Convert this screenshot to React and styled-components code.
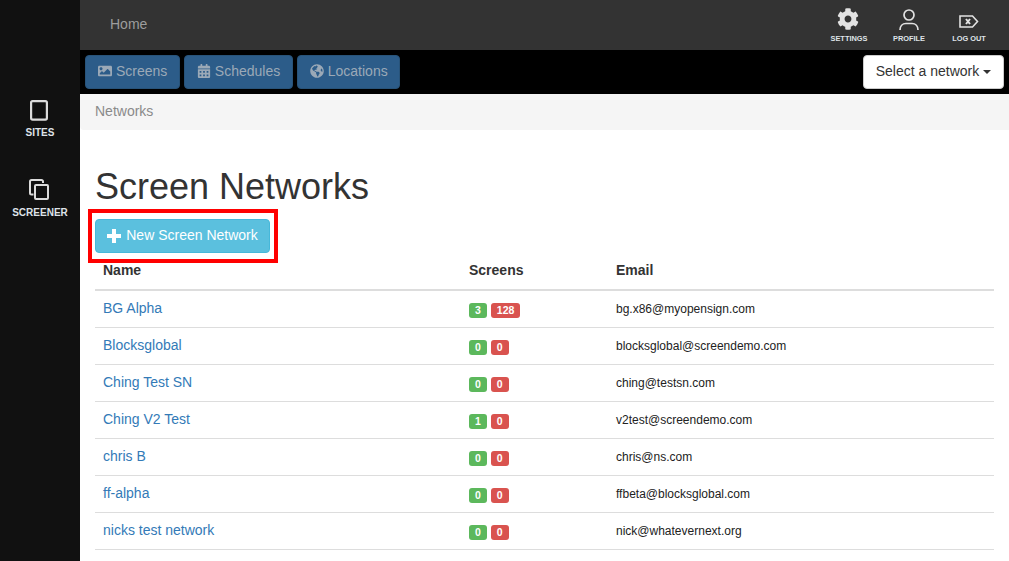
import React from 'react'
import styled, { createGlobalStyle } from 'styled-components'
import { FaCog, FaImage, FaCalendarAlt, FaGlobeAmericas } from 'react-icons/fa'

const GlobalStyle = createGlobalStyle`
  html, body {
    margin: 0;
    padding: 0;
    height: 100%;
    overflow: hidden;
    background: #fff;
  }
  body {
    font-family: "Liberation Sans", Arial, sans-serif;
    font-size: 14px;
    line-height: 20px;
    color: #333;
  }
  * { box-sizing: border-box; }
`

const networks = [
  { name: 'BG Alpha', up: 3, down: 128, email: 'bg.x86@myopensign.com' },
  { name: 'Blocksglobal', up: 0, down: 0, email: 'blocksglobal@screendemo.com' },
  { name: 'Ching Test SN', up: 0, down: 0, email: 'ching@testsn.com' },
  { name: 'Ching V2 Test', up: 1, down: 0, email: 'v2test@screendemo.com' },
  { name: 'chris B', up: 0, down: 0, email: 'chris@ns.com' },
  { name: 'ff-alpha', up: 0, down: 0, email: 'ffbeta@blocksglobal.com' },
  { name: 'nicks test network', up: 0, down: 0, email: 'nick@whatevernext.org' },
]

const Page = styled.div`
  display: flex;
  width: 1009px;
  height: 561px;
  overflow: hidden;
`

const Sidebar = styled.nav`
  width: 80px;
  flex: none;
  background: #111;
  padding-top: 100px;
  display: flex;
  flex-direction: column;
  gap: 39px;
`

const SideItem = styled.a`
  display: flex;
  flex-direction: column;
  align-items: center;
  gap: 6px;
  color: #dfe3e8;
  font-size: 10px;
  line-height: 12px;
  font-weight: 700;

  svg { display: block; }
`

const Main = styled.div`
  flex: 1;
  min-width: 0;
  display: flex;
  flex-direction: column;
`

const TopBar = styled.header`
  height: 50px;
  background: #333;
  display: flex;
  align-items: flex-start;
  justify-content: space-between;
  padding-left: 30px;
`

const HomeLink = styled.a`
  color: #9d9d9d;
  font-size: 14px;
  line-height: 48px;
`

const TopIcons = styled.div`
  display: flex;
  padding-top: 6px;
  margin-right: 10px;
`

const TopIcon = styled.a`
  display: flex;
  flex-direction: column;
  align-items: center;
  width: 60px;
  color: #dfe3e8;
  font-size: 7.4px;
  line-height: 9px;
  font-weight: 700;
  white-space: nowrap;

  svg { display: block; height: 26px; margin-bottom: 2px; }
`

const SettingsIcon = styled(FaCog)`
  margin-right: 2px;
  color: #e2e2e2;
`

const SubNav = styled.div`
  height: 44px;
  background: #000;
  display: flex;
  align-items: flex-start;
  justify-content: space-between;
  padding: 5px 5px 0 5px;
`

const TabGroup = styled.div`
  display: flex;
  gap: 4px;
`

const Tab = styled.a`
  display: flex;
  align-items: center;
  gap: 4px;
  height: 34px;
  padding: 0 11.5px 2px 12px;
  background: #2c5c89;
  border: 1px solid #285379;
  border-radius: 4px;
  color: #9ba9b7;
  font-size: 14px;

  svg { display: block; width: 14px; height: 14px; }
`

const NetworkSelect = styled.button`
  height: 34px;
  width: 141px;
  padding: 0 0 2px;
  background: #fff;
  border: 1px solid #ccc;
  border-radius: 4px;
  color: #333;
  font: 14px/20px "Liberation Sans", Arial, sans-serif;
  display: flex;
  align-items: center;
  justify-content: center;
  gap: 4px;
`

const Caret = styled.span`
  width: 0;
  height: 0;
  margin-top: 2px;
  border-top: 4px solid #333;
  border-left: 4px solid transparent;
  border-right: 4px solid transparent;
`

const Breadcrumb = styled.div`
  height: 36px;
  background: #f5f5f5;
  border-radius: 0 0 0 4px;
  color: #8a8a8a;
  font-size: 14px;
  line-height: 34px;
  padding-left: 15px;
`

const Content = styled.main`
  padding: 0 15px;
`

const Title = styled.h1`
  margin: 37px 0 12px;
  height: 40px;
  font-size: 36px;
  line-height: 40px;
  font-weight: 500;
  color: #333;
`

const Highlighted = styled.div`
  position: relative;
  width: 175px;

  &::after {
    content: '';
    position: absolute;
    inset: -10px -8px -10px -7px;
    border: 4px solid #f00;
    pointer-events: none;
  }
`

const NewButton = styled.button`
  display: flex;
  align-items: center;
  justify-content: center;
  gap: 5px;
  width: 175px;
  height: 34px;
  padding: 0 0 2px;
  background: #5bc0de;
  border: 1px solid #46b8da;
  border-radius: 4px;
  color: #fff;
  font: 14px/20px "Liberation Sans", Arial, sans-serif;

  svg { display: block; margin-top: 1px; }
`

const Table = styled.table`
  width: 899px;
  border-collapse: collapse;
  table-layout: fixed;
`

const Th = styled.th`
  width: ${p => p.$w};
  padding: 7px 8px 9px;
  text-align: left;
  font-size: 14px;
  line-height: 20px;
  font-weight: 700;
  border-bottom: 2px solid #ddd;
`

const Td = styled.td`
  padding: 7px 8px 9px;
  height: 37px;
  border-bottom: 1px solid #ddd;
  font-size: 14px;
  line-height: 20px;
`

const EmailCell = styled(Td)`
  padding: 8px;
  font-size: 12px;
  color: #222;
`

const NameLink = styled.a`
  color: #337ab7;
`

const Badges = styled.div`
  display: flex;
  gap: 4px;
  margin-top: 5px;
`

const Badge = styled.span`
  display: block;
  height: 15px;
  padding: 0 6px;
  border-radius: 3px;
  background: ${p => (p.$kind === 'up' ? '#5cb85c' : '#d9534f')};
  color: #fff;
  font-size: 10.5px;
  line-height: 14px;
  font-weight: 700;
`

const SitesIcon = () => (
  <svg width="20" height="21" viewBox="0 0 20 21" fill="none" stroke="#dcdcdc" strokeWidth="2.2">
    <rect x="1.1" y="1.1" width="15.8" height="18.5" rx="1.5" />
  </svg>
)

const ScreenerIcon = () => (
  <svg width="22" height="23" viewBox="0 0 22 23" fill="none" stroke="#dcdcdc" strokeWidth="2">
    <rect x="6" y="7" width="13" height="14" rx="1" />
    <path d="M4.5 16.5H2.5A1.5 1.5 0 0 1 1 15V3.5A1.5 1.5 0 0 1 2.5 2h10A1.5 1.5 0 0 1 14 3.5V5" />
  </svg>
)

const ProfileIcon = () => (
  <svg width="22" height="26" viewBox="0 0 22 26" fill="none" stroke="#e2e2e2" strokeWidth="1.7">
    <circle cx="11" cy="9" r="5" />
    <path d="M2 24c0-4 2.5-6.5 6-6.5h6c3.5 0 6 2.5 6 6.5" />
  </svg>
)

const LogoutIcon = () => (
  <svg width="20" height="26" viewBox="0 0 20 26" fill="none" stroke="#e2e2e2" strokeWidth="1.6">
    <path d="M1 10h12.5l5 5.5-5 5.5H1z" />
    <path d="M7 13l4 5M11 13l-4 5" strokeWidth="2" />
  </svg>
)

const PlusIcon = () => (
  <svg width="14" height="14" viewBox="0 0 14 14" fill="#fff">
    <path d="M5 0h4v5h5v4H9v5H5V9H0V5h5z" />
  </svg>
)

const App = () => (
  <Page>
    <GlobalStyle />
    <Sidebar>
      <SideItem>
        <SitesIcon />
        SITES
      </SideItem>
      <SideItem>
        <ScreenerIcon />
        SCREENER
      </SideItem>
    </Sidebar>
    <Main>
      <TopBar>
        <HomeLink>Home</HomeLink>
        <TopIcons>
          <TopIcon>
            <SettingsIcon size={22} />
            SETTINGS
          </TopIcon>
          <TopIcon>
            <ProfileIcon />
            PROFILE
          </TopIcon>
          <TopIcon>
            <LogoutIcon />
            LOG OUT
          </TopIcon>
        </TopIcons>
      </TopBar>
      <SubNav>
        <TabGroup>
          <Tab><FaImage />Screens</Tab>
          <Tab><FaCalendarAlt />Schedules</Tab>
          <Tab><FaGlobeAmericas />Locations</Tab>
        </TabGroup>
        <NetworkSelect>Select a network <Caret /></NetworkSelect>
      </SubNav>
      <Breadcrumb>Networks</Breadcrumb>
      <Content>
        <Title>Screen Networks</Title>
        <Highlighted>
          <NewButton><PlusIcon />New Screen Network</NewButton>
        </Highlighted>
        <Table>
          <thead>
            <tr>
              <Th $w="366px">Name</Th>
              <Th $w="147px">Screens</Th>
              <Th>Email</Th>
            </tr>
          </thead>
          <tbody>
            {networks.map(n => (
              <tr key={n.name}>
                <Td><NameLink>{n.name}</NameLink></Td>
                <Td>
                  <Badges>
                    <Badge $kind="up">{n.up}</Badge>
                    <Badge $kind="down">{n.down}</Badge>
                  </Badges>
                </Td>
                <EmailCell>{n.email}</EmailCell>
              </tr>
            ))}
          </tbody>
        </Table>
      </Content>
    </Main>
  </Page>
)

export default App
